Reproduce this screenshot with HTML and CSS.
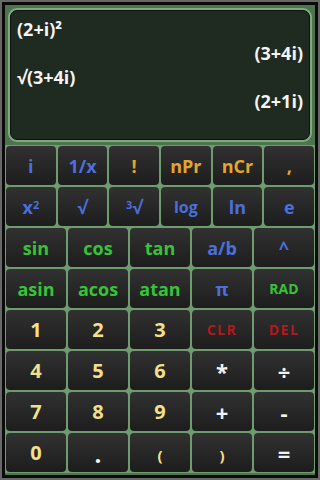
FILE: index.html
```html
<!DOCTYPE html>
<html lang="en">
  <head>
    <meta charset="UTF-8" />
    <meta name="viewport" content="width=device-width, initial-scale=1.0" />
    <title>Calculator</title>
    <link rel="stylesheet" href="styles.css">
  </head>
  <body>
    <div class="frame">
      <div class="display">
        <div class="line">(2+i)²</div>
        <div class="line right">(3+4i)</div>
        <div class="line">√(3+4i)</div>
        <div class="line right">(2+1i)</div>
      </div>
      <div class="keys">
        <div class="row">
          <div class="key blue">i</div>
          <div class="key blue">1/x</div>
          <div class="key orange">!</div>
          <div class="key orange">nPr</div>
          <div class="key orange">nCr</div>
          <div class="key orange">,</div>
        </div>
        <div class="row">
          <div class="key blue">x<sup>2</sup></div>
          <div class="key blue">√</div>
          <div class="key blue"><sup>3</sup>√</div>
          <div class="key blue small">log</div>
          <div class="key blue">ln</div>
          <div class="key blue">e</div>
        </div>
        <div class="row">
          <div class="key green">sin</div>
          <div class="key green">cos</div>
          <div class="key green">tan</div>
          <div class="key blue">a/b</div>
          <div class="key blue">^</div>
        </div>
        <div class="row">
          <div class="key green">asin</div>
          <div class="key green">acos</div>
          <div class="key green">atan</div>
          <div class="key blue">π</div>
          <div class="key green tiny">RAD</div>
        </div>
        <div class="row">
          <div class="key digit">1</div>
          <div class="key digit">2</div>
          <div class="key digit">3</div>
          <div class="key red">CLR</div>
          <div class="key red">DEL</div>
        </div>
        <div class="row">
          <div class="key digit">4</div>
          <div class="key digit">5</div>
          <div class="key digit">6</div>
          <div class="key white">*</div>
          <div class="key white">÷</div>
        </div>
        <div class="row">
          <div class="key digit">7</div>
          <div class="key digit">8</div>
          <div class="key digit">9</div>
          <div class="key white">+</div>
          <div class="key white">-</div>
        </div>
        <div class="row">
          <div class="key digit">0</div>
          <div class="key white dot">.</div>
          <div class="key digit paren">(</div>
          <div class="key digit paren">)</div>
          <div class="key white">=</div>
        </div>
      </div>
    </div>
  </body>
</html>
```

FILE: styles.css
```css
body {
  margin: 0;
  background-color: #686868;
  font-family: "Open Sans", "DejaVu Sans", sans-serif;
  font-weight: bold;
}

.frame {
  margin: 2px;
  height: 470px;
  border: 3px solid #0b0b0b;
  background-color: #4d744d;
}

.display {
  box-sizing: border-box;
  height: 130px;
  margin: 5px 5px 0 5px;
  padding: 6px 6px;
  background-color: #1f2a20;
  border: 1px solid #111;
  border-radius: 7px;
  box-shadow: 0 0 0 2px #7eab7e;
  color: #f4f4f4;
  font-size: 18px;
}

.line {
  height: 24px;
  line-height: 24px;
}

.right {
  text-align: right;
}

.keys {
  margin-top: 5px;
  padding: 1px;
  display: flex;
  flex-direction: column;
  gap: 2px;
  background-color: #6e9c6e;
}

.row {
  display: flex;
  gap: 2px;
  height: 39px;
}

.key {
  flex: 1;
  display: flex;
  align-items: center;
  justify-content: center;
  border-radius: 4px;
  background: linear-gradient(#313131, #1d1d1d);
  font-size: 18px;
}

.key sup {
  font-size: 11px;
  line-height: 0;
  position: relative;
  top: -2px;
}

.blue {
  color: #4b6fdc;
}

.orange {
  color: #e4a52c;
}

.green {
  color: #37c337;
}

.red {
  color: #b3191b;
  font-size: 14px;
  letter-spacing: 1.5px;
}

.digit {
  color: #f2e08c;
  font-size: 20px;
}

.white {
  color: #f2f2f2;
  font-size: 22px;
}

.small {
  font-size: 16px;
}

.tiny {
  font-size: 14px;
}

.paren {
  font-size: 15px;
  padding-top: 4px;
  box-sizing: border-box;
}

.dot {
  align-items: flex-end;
  padding-bottom: 2px;
  box-sizing: border-box;
  font-size: 24px;
}
```
